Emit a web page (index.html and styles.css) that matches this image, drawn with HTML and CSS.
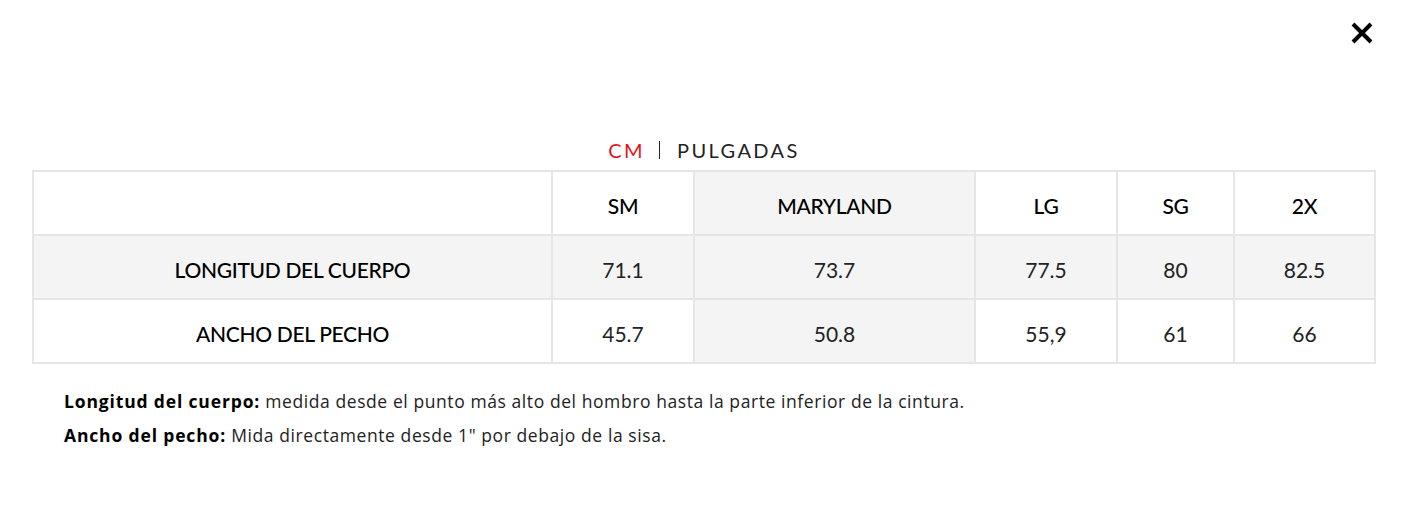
FILE: index.html
```html
<!DOCTYPE html>
<html lang="es">
<head>
<meta charset="utf-8">
<title>Tabla de tallas</title>
<link rel="stylesheet" href="styles.css">
</head>
<body>
<div class="modal">
  <div class="topbar">
    <button class="close" aria-label="Cerrar">
      <svg width="24" height="24" viewBox="0 0 24 24"><path d="M3 3 L21 21 M21 3 L3 21" stroke="#000" stroke-width="4" fill="none"/></svg>
    </button>
  </div>
  <div class="units">
    <span class="unit active">CM</span>
    <span class="sep"></span>
    <span class="unit">PULGADAS</span>
  </div>
  <table class="sizes">
    <colgroup>
      <col class="c-label"><col class="c-sm"><col class="c-md"><col class="c-lg"><col class="c-sg"><col class="c-2x">
    </colgroup>
    <thead>
      <tr><th></th><th>SM</th><th class="hl">MARYLAND</th><th>LG</th><th>SG</th><th>2X</th></tr>
    </thead>
    <tbody>
      <tr class="shade"><th>LONGITUD DEL CUERPO</th><td>71.1</td><td>73.7</td><td>77.5</td><td>80</td><td>82.5</td></tr>
      <tr><th>ANCHO DEL PECHO</th><td>45.7</td><td class="hl">50.8</td><td>55,9</td><td>61</td><td>66</td></tr>
    </tbody>
  </table>
  <div class="notes">
    <p><b>Longitud del cuerpo:</b> medida desde el punto más alto del hombro hasta la parte inferior de la cintura.</p>
    <p><b>Ancho del pecho:</b> Mida directamente desde 1" por debajo de la sisa.</p>
  </div>
</div>
</body>
</html>
```
FILE: styles.css
```css
html, body { margin: 0; padding: 0; background: #fff; }
body { font-family: Lato, "Noto Sans", sans-serif; color: #111; }
.modal { width: 1406px; height: 510px; box-sizing: border-box; padding: 0 30px 0 32px; }
.topbar { display: flex; justify-content: flex-end; height: 128px; padding-top: 21px; box-sizing: border-box; }
.close { width: 24px; height: 24px; padding: 0; border: 0; background: none; margin-right: 2px; }
.close svg { display: block; }
.units { display: flex; justify-content: center; align-items: center; height: 42px; font-size: 20px; letter-spacing: 2.4px; color: #222; padding-top: 2px; box-sizing: border-box; }
.unit { line-height: 40px; }
.unit.active { color: #e3141b; }
.sep { width: 1px; height: 18px; background: #222; margin: 0 17px 0 14px; }
.sizes { border-collapse: collapse; width: 1343px; table-layout: fixed; font-size: 21px; }
.c-label { width: 519px; } .c-sm { width: 142px; } .c-md { width: 281px; } .c-lg { width: 142px; } .c-sg { width: 117px; } .c-2x { width: 141px; }
.sizes th, .sizes td { border: 2px solid #e6e6e6; height: 62px; text-align: center; padding: 4px 0 0; box-sizing: border-box; }
.sizes tr { height: 64px; }
.sizes th { font-weight: 500; color: #000; letter-spacing: -0.3px; }
.sizes td { font-weight: 400; color: #222; }
.sizes .hl { background: #f4f4f4; }
.sizes .shade th, .sizes .shade td { background: #f4f4f4; }
.notes { padding: 25px 0 0 32px; font-family: "Open Sans", sans-serif; font-size: 17.5px; letter-spacing: 0.58px; color: #222; }
.notes p { margin: 0 0 10px; line-height: 24px; }
.notes b { font-weight: 700; color: #000; letter-spacing: 0.85px; }
```
